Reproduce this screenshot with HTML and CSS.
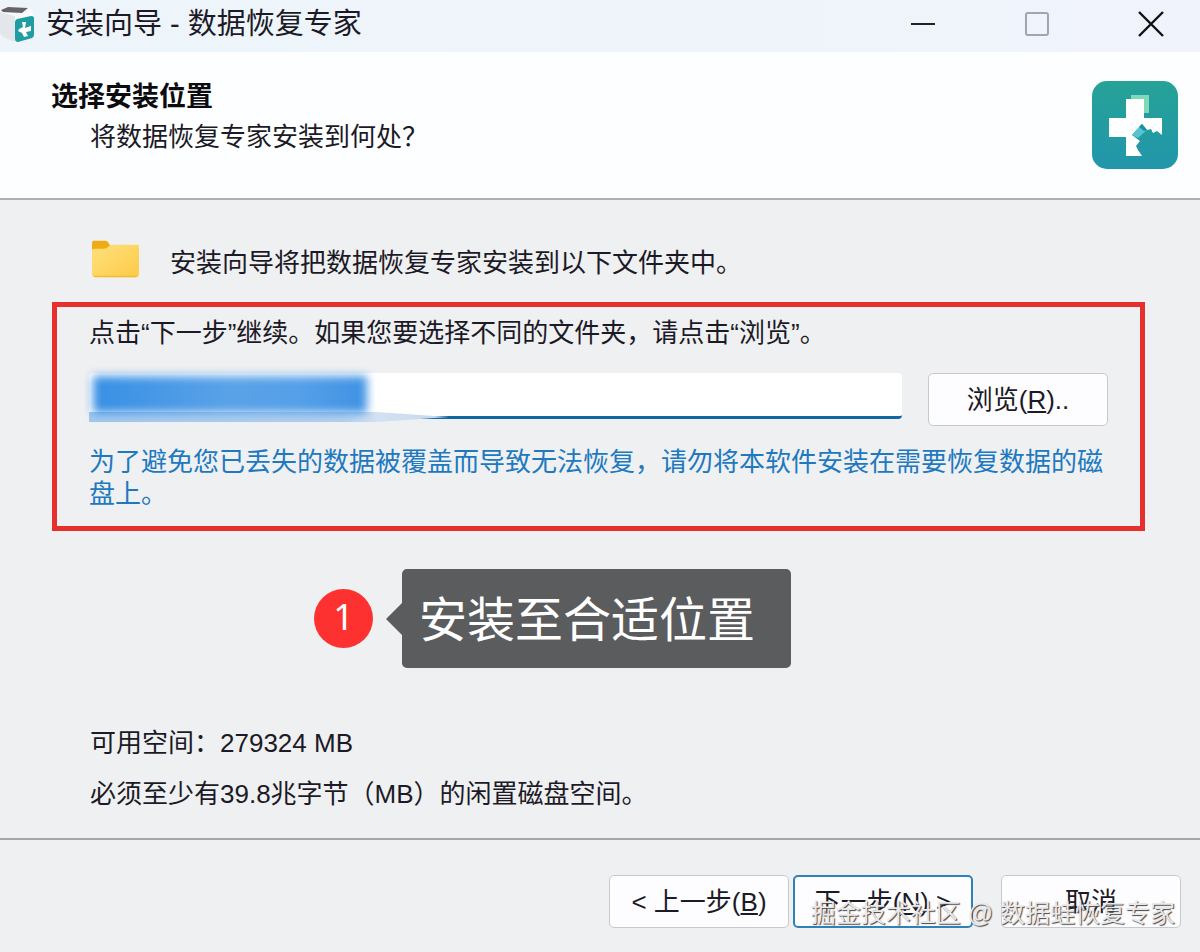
FILE: index.html
```html
<!DOCTYPE html>
<html lang="zh-CN">
<head>
<meta charset="utf-8">
<title>安装向导 - 数据恢复专家</title>
<link rel="stylesheet" href="styles.css">
</head>
<body>
<div class="window">
  <header class="titlebar">
    <svg class="app-icon" viewBox="0 0 34 42" aria-hidden="true">
      <path d="M0 9 15 13 15 39 3 34 0 30Z" fill="#e3e7ec"/>
      <path d="M15 12 33 8 33 34 15 39Z" fill="#f9fbfc"/>
      <path d="M0 6 6 4 30 5 33 9 15 13 0 9Z" fill="#f6f8fa"/>
      <path d="M1 7 8 4 28 5 22 10 3 9Z" fill="#66646a"/>
      <path d="M17 16 31 13Q34 13 34 15V32Q34 34 32 35L18 39Q15 39 15 36V19Q15 17 17 16Z" fill="#1f9da3"/>
      <path d="M22 19 26 19 25 25 31 23 31 28 26 29 28 33 24 34 22 30 18 28 19 26 23 24Z" fill="#fff"/>
    </svg>
    <h1 class="title">安装向导 - 数据恢复专家</h1>
    <div class="controls">
      <button type="button" class="control" aria-label="最小化"><svg viewBox="0 0 26 26"><path d="M1 13H25" stroke="#222" stroke-width="2"/></svg></button>
      <button type="button" class="control" aria-label="最大化" disabled><svg viewBox="0 0 26 26"><rect x="2" y="2" width="22" height="22" rx="2" fill="none" stroke="#a2a4b0" stroke-width="2"/></svg></button>
      <button type="button" class="control" aria-label="关闭"><svg viewBox="0 0 26 26"><path d="M1 1 25 25M25 1 1 25" stroke="#111" stroke-width="2.4"/></svg></button>
    </div>
  </header>

  <section class="banner">
    <div>
      <h2 class="heading">选择安装位置</h2>
      <p class="subheading">将数据恢复专家安装到何处？</p>
    </div>
    <svg class="logo" viewBox="0 0 86 88" aria-hidden="true">
      <defs><linearGradient id="teal" x1="0" y1="0" x2="0" y2="1"><stop offset="0" stop-color="#26a297"/><stop offset="1" stop-color="#2196ab"/></linearGradient></defs>
      <rect width="86" height="88" rx="15" fill="url(#teal)"/>
      <path d="M39 14H57V32H51V18H39Z" fill="#7fd9b8"/>
      <path d="M34 18H52V37H70V54L65 50 61 52 59 48 55 49 50 43 40 54 48 60 44 65 46 69 50 75H34V56H17V37H34Z" fill="#fff"/>
      <path d="M50 43 55 49 46 57 40 54Z" fill="#55c5cf"/>
      <path d="M47 46 50 43 55 49 52 50Z" fill="#1f8fa0"/>
    </svg>
  </section>

  <main class="content">
    <div class="intro">
      <svg class="folder" viewBox="0 0 48 38" aria-hidden="true">
        <defs><linearGradient id="gold" x1="0" y1="0" x2="1" y2="1"><stop offset="0" stop-color="#ffe07e"/><stop offset="1" stop-color="#fccb46"/></linearGradient></defs>
        <path d="M1 3Q1 1 3 1H14Q16 1 17 3L19 6V14H1Z" fill="#f0ab12"/>
        <path d="M1 11Q1 9 3 9H13Q15 9 17 7L19 5H45Q47 5 47 7V34Q47 37 44 37H4Q1 37 1 34Z" fill="url(#gold)"/>
        <path d="M3 36H45" stroke="#eab53c"/>
      </svg>
      <p>安装向导将把数据恢复专家安装到以下文件夹中。</p>
    </div>

    <section class="location">
      <label for="path">点击“下一步”继续。如果您要选择不同的文件夹，请点击“浏览”。</label>
      <div class="path-row">
        <div class="field">
          <input id="path" class="path" type="text">
          <span class="smear"></span>
          <span class="selection"></span>
        </div>
        <button type="button" class="button">浏览(<u>R</u>)..</button>
      </div>
      <p class="warning">为了避免您已丢失的数据被覆盖而导致无法恢复，请勿将本软件安装在需要恢复数据的磁盘上。</p>
    </section>

    <div class="step">
      <span class="step-number">1</span>
      <svg class="pointer" viewBox="0 0 16 32" aria-hidden="true"><path d="M16 0V32L0 16Z" fill="#5b5c5e"/></svg>
      <p class="step-label">安装至合适位置</p>
    </div>

    <div class="space">
      <p>可用空间：279324 MB</p>
      <p>必须至少有39.8兆字节（MB）的闲置磁盘空间。</p>
    </div>
  </main>

  <footer class="footer">
    <button type="button" class="button">&lt; 上一步(<u>B</u>)</button>
    <button type="button" class="button primary">下一步(<u>N</u>) &gt;</button>
    <button type="button" class="button cancel">取消</button>
    <span class="watermark">掘金技术社区 @ 数据蛙恢复专家</span>
  </footer>
</div>
</body>
</html>
```
FILE: styles.css
```css
* {
  box-sizing: border-box;
}

body {
  margin: 0;
  font-family: "Liberation Sans", "Noto Sans CJK SC", sans-serif;
  font-size: 26px;
  line-height: 32px;
  color: #1c1a26;
}

h1,
h2,
p {
  margin: 0;
  font-weight: 400;
}

.window {
  display: flex;
  flex-direction: column;
  min-height: 100vh;
  background: #eff0f2;
}

.titlebar {
  display: flex;
  align-items: center;
  height: 52px;
  padding: 0 36px 4px 0;
  background: linear-gradient(90deg, #edf5fa, #f0f3fb);
}

.app-icon {
  width: 34px;
  height: 42px;
}

.title {
  flex: 1;
  padding-left: 12px;
  font-size: 29px;
}

.controls {
  display: flex;
  gap: 88px;
}

.control {
  width: 26px;
  height: 26px;
  padding: 0;
  border: 0;
  background: none;
}

.control svg {
  display: block;
}

.banner {
  display: flex;
  justify-content: space-between;
  padding: 29px 22px 29px 51px;
  border-bottom: 2px solid #aeafb2;
  background: #fdfeff;
}

.heading {
  font-size: 27px;
  font-weight: 700;
  color: #0c0c10;
}

.subheading {
  padding: 8px 0 0 39px;
}

.logo {
  width: 86px;
  height: 88px;
}

.content {
  flex: 1;
  padding: 39px 55px 0 52px;
}

.intro {
  display: flex;
  align-items: flex-end;
  gap: 30px;
  padding-left: 39px;
}

.folder {
  width: 49px;
  height: 40px;
}

.location {
  margin-top: 23px;
  padding: 10px 32px 16px;
  border: 5px solid #e7302d;
}

.location label {
  display: block;
}

.path-row {
  display: flex;
  gap: 26px;
  margin-top: 24px;
}

.field {
  position: relative;
  flex: 1;
  padding-bottom: 6px;
}

.path {
  display: block;
  width: 100%;
  height: 46px;
  padding: 0 10px;
  border: 0;
  border-bottom: 3px solid #1166a5;
  border-radius: 4px;
  background: #fff;
  font: inherit;
  outline: 0;
}

.smear {
  position: absolute;
  left: 0;
  bottom: 4px;
  width: 360px;
  height: 10px;
  background: linear-gradient(90deg, #a3c8ee, #b4d0ee 70%, #d3e2f2 80%, #c3d8ec);
  clip-path: polygon(0 0, 80% 0, 100% 50%, 80% 100%, 0 100%);
}

.selection {
  position: absolute;
  left: 4px;
  top: 3px;
  width: 274px;
  height: 37px;
  background: linear-gradient(90deg, #3890e4, #5aa2e8 50%, #55a0e8 75%, #3f92e4);
  filter: blur(5px);
}

.button {
  width: 180px;
  height: 53px;
  padding: 0;
  border: 1px solid #c8c9cd;
  border-radius: 5px;
  background: #fdfdff;
  color: inherit;
  font: inherit;
}

.button u {
  text-decoration-thickness: 2px;
  text-underline-offset: 2px;
}

.warning {
  margin-top: 20px;
  color: #2079bf;
}

.step {
  display: flex;
  align-items: center;
  padding: 38px 0 0 262px;
}

.step-number {
  width: 59px;
  height: 59px;
  border-radius: 50%;
  background: #fd3230;
  color: #fff;
  font-family: "Noto Sans", sans-serif;
  font-size: 36px;
  line-height: 56px;
  text-align: center;
}

.pointer {
  width: 16px;
  height: 32px;
  margin-left: 13px;
}

.step-label {
  padding: 20px 36px 15px 17px;
  border-radius: 5px;
  background: #5b5c5e;
  color: #fff;
  font-size: 48px;
  line-height: 64px;
}

.space {
  display: grid;
  gap: 19px;
  padding: 59px 0 28px 38px;
}

.footer {
  position: relative;
  display: flex;
  justify-content: flex-end;
  gap: 4px;
  padding: 35px 19px 24px;
  border-top: 2px solid #a4a6a9;
}

.primary {
  border: 2px solid #2f82b8;
}

.cancel {
  margin-left: 24px;
}

.watermark {
  position: absolute;
  right: 25px;
  bottom: 23px;
  color: #e9e9eb;
  font-size: 25px;
  line-height: 32px;
  white-space: nowrap;
  text-shadow: 1px 1px 1px #444;
}
```
